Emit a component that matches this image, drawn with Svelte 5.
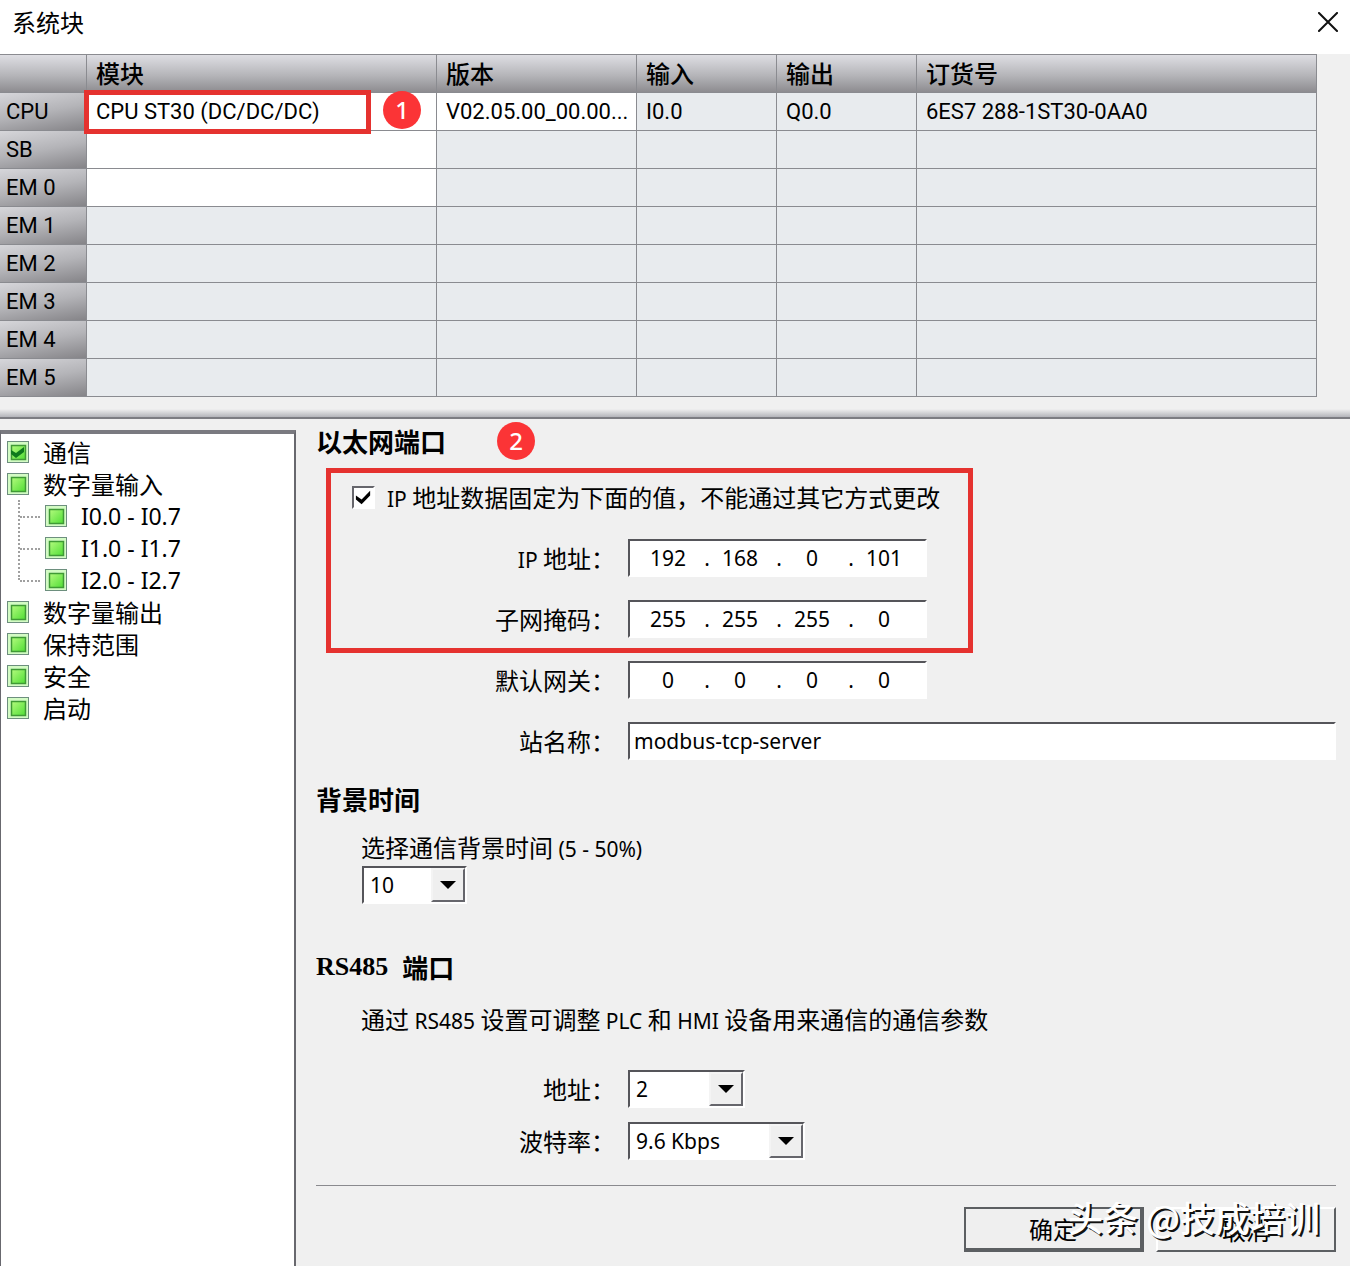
<script lang="ts">
  const modules = [
    {
      slot: "CPU",
      name: "CPU ST30 (DC/DC/DC)",
      version: "V02.05.00_00.00...",
      input: "I0.0",
      output: "Q0.0",
      order: "6ES7 288-1ST30-0AA0",
      editable: true,
    },
    { slot: "SB", editable: true },
    { slot: "EM 0", editable: true },
    { slot: "EM 1" },
    { slot: "EM 2" },
    { slot: "EM 3" },
    { slot: "EM 4" },
    { slot: "EM 5" },
  ];

  const tree = [
    { label: "通信", checked: true },
    { label: "数字量输入", children: ["I0.0 - I0.7", "I1.0 - I1.7", "I2.0 - I2.7"] },
    { label: "数字量输出" },
    { label: "保持范围" },
    { label: "安全" },
    { label: "启动" },
  ];

  let fixedIp = true;
  let ip = ["192", "168", "0", "101"];
  let mask = ["255", "255", "255", "0"];
  let gateway = ["0", "0", "0", "0"];
  let station = "modbus-tcp-server";
  let background = "10";
  let address = "2";
  let baud = "9.6 Kbps";
</script>

{#snippet node(checked)}
  <svg class="node" width="24" height="24" viewBox="0 0 24 24" aria-hidden="true">
    <rect x="1.5" y="1.5" width="21" height="21" fill="#d3fbc4" stroke="#6d8f7e" />
    <rect x="5.5" y="5.5" width="14" height="14" fill="url(#green)" stroke="#3f9a35" stroke-width="1.5" />
    {#if checked}
      <path d="M5 10l5 3 8-6v5l-8 6-5-4z" fill="#0d7a1c" />
    {/if}
  </svg>
{/snippet}

{#snippet arrow()}
  <span class="arrow" aria-hidden="true">
    <svg width="16" height="8" viewBox="0 0 16 8"><path d="M0 0h16L8 8z" fill="#000" /></svg>
  </span>
{/snippet}

{#snippet octets(id, parts)}
  <div class="ip" role="group" aria-labelledby="{id}-label">
    {#each parts as part, i}
      {#if i > 0}<span class="dot">.</span>{/if}
      <input id="{id}-{i}" value={part} maxlength="3" />
    {/each}
  </div>
{/snippet}

<svg class="defs" width="0" height="0" aria-hidden="true">
  <linearGradient id="green" x1="0" y1="0" x2="1" y2="1">
    <stop offset="0" stop-color="#b4fb7e" />
    <stop offset="1" stop-color="#4fdd35" />
  </linearGradient>
</svg>

<div class="dialog">
  <header>
    <h1>系统块</h1>
    <button class="close" aria-label="关闭">
      <svg width="20" height="20" viewBox="0 0 20 20">
        <path d="M1 1l18 18M19 1L1 19" stroke="#111" stroke-width="2" stroke-linecap="square" />
      </svg>
    </button>
  </header>

  <div class="modules">
    <table>
      <colgroup>
        <col class="slot" />
        <col class="name" />
        <col class="version" />
        <col class="io" />
        <col class="io" />
        <col />
      </colgroup>
      <thead>
        <tr>
          <td></td>
          <th>模块</th>
          <th>版本</th>
          <th>输入</th>
          <th>输出</th>
          <th>订货号</th>
        </tr>
      </thead>
      <tbody>
        {#each modules as row, i}
          <tr>
            <th scope="row">{row.slot}</th>
            <td class="module" class:editable={row.editable}>
              {row.name ?? ""}
              {#if i == 0}
                <span class="mark cell-mark"></span>
                <span class="badge one">1</span>
              {/if}
            </td>
            <td class:editable={row.version}>{row.version ?? ""}</td>
            <td>{row.input ?? ""}</td>
            <td>{row.output ?? ""}</td>
            <td>{row.order ?? ""}</td>
          </tr>
        {/each}
      </tbody>
    </table>
  </div>

  <div class="body">
    <nav>
      <ul>
        {#each tree as item}
          <li>
            <button>{@render node(item.checked)}{item.label}</button>
            {#if item.children}
              <ul class="children">
                {#each item.children as child}
                  <li><button class="latin">{@render node(false)}{child}</button></li>
                {/each}
              </ul>
            {/if}
          </li>
        {/each}
      </ul>
    </nav>

    <form on:submit|preventDefault>
      <section class="ethernet">
        <h2>以太网端口 <span class="badge two">2</span></h2>
        <div class="fields">
          <span class="mark group-mark"></span>
          <label class="check">
            <input type="checkbox" bind:checked={fixedIp} />
            <span><span class="latin">IP</span> 地址数据固定为下面的值，不能通过其它方式更改</span>
          </label>
          <div class="field">
            <label id="ip-label" for="ip-0"><span class="latin">IP</span> 地址：</label>
            {@render octets("ip", ip)}
          </div>
          <div class="field">
            <label id="mask-label" for="mask-0">子网掩码：</label>
            {@render octets("mask", mask)}
          </div>
          <div class="field">
            <label id="gateway-label" for="gateway-0">默认网关：</label>
            {@render octets("gateway", gateway)}
          </div>
          <div class="field">
            <label for="station">站名称：</label>
            <input id="station" class="text" bind:value={station} />
          </div>
        </div>
      </section>

      <section class="time">
        <h2>背景时间</h2>
        <label class="hint" for="background">选择通信背景时间 <span class="latin">(5 - 50%)</span></label>
        <div class="select small">
          <select id="background" bind:value={background}>
            <option>10</option>
            <option>20</option>
            <option>50</option>
          </select>
          {@render arrow()}
        </div>
      </section>

      <section class="serial">
        <h2><span class="serif">RS485</span> 端口</h2>
        <p class="hint">
          通过 <span class="latin">RS485</span> 设置可调整 <span class="latin">PLC</span> 和
          <span class="latin">HMI</span> 设备用来通信的通信参数
        </p>
        <div class="field">
          <label for="address">地址：</label>
          <div class="select medium">
            <select id="address" bind:value={address}>
              <option>1</option>
              <option>2</option>
              <option>3</option>
            </select>
            {@render arrow()}
          </div>
        </div>
        <div class="field">
          <label for="baud">波特率：</label>
          <div class="select large">
            <select id="baud" bind:value={baud}>
              <option>9.6 Kbps</option>
              <option>19.2 Kbps</option>
              <option>187.5 Kbps</option>
            </select>
            {@render arrow()}
          </div>
        </div>
      </section>

      <footer>
        <button class="default" type="submit">确定</button>
        <button type="button">取消</button>
        <span class="watermark">头条 @技成培训</span>
      </footer>
    </form>
  </div>
</div>

<style>
  :global(body) {
    margin: 0;
    background: #f0f0f0;
  }

  .dialog {
    display: flex;
    flex-direction: column;
    min-height: 100vh;
    color: #000;
    font-family: "Noto Sans CJK SC", sans-serif;
    font-size: 24px;
    line-height: 38px;
  }

  .dialog :global(*) {
    box-sizing: border-box;
  }

  .defs {
    position: absolute;
  }

  h1,
  h2,
  p,
  ul {
    margin: 0;
    padding: 0;
  }

  button,
  input,
  select {
    margin: 0;
    padding: 0;
    border: none;
    border-radius: 0;
    color: inherit;
    font: inherit;
    outline: none;
  }

  .latin,
  .ip,
  .text,
  .select {
    font-family: "Noto Sans", sans-serif;
    font-size: 21px;
  }

  .latin {
    line-height: 1;
  }

  header {
    display: flex;
    justify-content: space-between;
    align-items: center;
    height: 54px;
    padding: 0 12px 10px;
    background: #fff;
  }

  h1 {
    font-size: 24px;
    font-weight: 400;
  }

  .close {
    display: flex;
    background: none;
  }

  /* module table */

  .modules {
    padding: 0 33px 12px 0;
  }

  table {
    width: 100%;
    table-layout: fixed;
    border-spacing: 0;
    border-top: 1px solid #8a8b90;
    font-family: Roboto, "Noto Sans CJK SC", sans-serif;
    font-size: 22px;
    line-height: 36px;
  }

  .slot {
    width: 87px;
  }

  .name {
    width: 350px;
  }

  .version {
    width: 200px;
  }

  .io {
    width: 140px;
  }

  th,
  td {
    height: 38px;
    padding: 1px 0 0 9px;
    border-right: 1px solid #8a8b90;
    border-bottom: 1px solid #8a8b90;
    background: #e8ebee;
    font-weight: 400;
    text-align: left;
    white-space: nowrap;
  }

  thead th,
  thead td {
    padding-top: 3px;
    background: linear-gradient(#dedee3, #b5b5b9 55%, #8d8c90);
    font-size: 24px;
    line-height: 34px;
  }

  thead th {
    font-weight: 500;
  }

  tbody th {
    padding-left: 6px;
    background: linear-gradient(170deg, #d6d6da, #b4b4b8 50%, #858488);
  }

  .editable {
    background: #fff;
  }

  .module {
    position: relative;
  }

  .mark {
    position: absolute;
    z-index: 1;
    border: 5px solid #e5322f;
    pointer-events: none;
  }

  .cell-mark {
    top: -3px;
    left: -3px;
    width: 287px;
    height: 44px;
  }

  .badge {
    width: 38px;
    height: 38px;
    border-radius: 50%;
    background: #fb3436;
    color: #fff;
    font-family: "Noto Sans", sans-serif;
    font-size: 24px;
    font-weight: 500;
    line-height: 38px;
    text-align: center;
  }

  .one {
    position: absolute;
    top: -2px;
    left: 296px;
  }

  /* lower half */

  .body {
    position: relative;
    display: flex;
    flex: 1;
  }

  .body::before {
    content: "";
    position: absolute;
    width: 100%;
    height: 8px;
    border-bottom: 2px solid #7c7d82;
    background: linear-gradient(#f0f0f0, #b4b5ba);
  }

  nav {
    width: 296px;
    margin-top: 21px;
    padding: 2px 5px;
    border: solid #68686e;
    border-width: 4px 2px 0 1px;
    border-top-color: #7a7a80;
    background: #fff;
  }

  nav ul {
    list-style: none;
  }

  nav button {
    display: flex;
    align-items: center;
    gap: 13px;
    height: 32px;
    background: none;
    line-height: 32px;
  }

  nav .latin {
    font-family: "Noto Sans", sans-serif;
    font-size: 23px;
  }

  .children {
    position: relative;
    padding-left: 38px;
  }

  .children::before {
    content: "";
    position: absolute;
    top: 0;
    left: 12px;
    height: 80px;
    border-left: 2px dotted #a0a0a0;
  }

  .children li {
    position: relative;
  }

  .children li::before {
    content: "";
    position: absolute;
    top: 16px;
    left: -24px;
    width: 20px;
    border-top: 2px dotted #a0a0a0;
  }

  form {
    display: flex;
    flex: 1;
    flex-direction: column;
    padding: 13px 14px 13px 20px;
  }

  h2 {
    display: flex;
    gap: 14px;
    height: 38px;
    font-size: 26px;
    font-weight: 700;
  }

  .two {
    margin-left: 37px;
  }

  .serif {
    font-family: "Liberation Serif", serif;
    font-size: 26px;
  }

  .fields {
    position: relative;
    display: flex;
    flex-direction: column;
    gap: 23px;
    margin-top: 18px;
  }

  .group-mark {
    top: -10px;
    left: 10px;
    width: 647px;
    height: 185px;
  }

  .check {
    display: flex;
    align-items: center;
    gap: 12px;
    height: 38px;
    padding-left: 36px;
  }

  .check input {
    appearance: none;
    width: 23px;
    height: 23px;
    border: 2px solid #fff;
    border-top-color: #66666c;
    border-left-color: #66666c;
    background: #fff;
  }

  .check input:checked {
    background: #fff
      url("data:image/svg+xml,%3Csvg xmlns='http://www.w3.org/2000/svg' viewBox='0 0 20 20'%3E%3Cpath d='M2 8l6 4 9-9v5l-9 9-6-5z'/%3E%3C/svg%3E");
  }

  .field {
    display: flex;
    gap: 13px;
    height: 38px;
  }

  .field label {
    width: 299px;
    text-align: right;
  }

  .ip,
  .text,
  .select {
    height: 38px;
    border: 2px solid #fff;
    border-top-color: #55555a;
    border-left-color: #55555a;
    background: #fff;
    line-height: 34px;
  }

  .ip {
    display: flex;
    width: 299px;
    padding-left: 8px;
  }

  .ip input {
    width: 60px;
    background: none;
    text-align: center;
  }

  .dot {
    width: 12px;
    text-align: right;
  }

  .text {
    flex: 1;
    padding-left: 4px;
  }

  .time {
    margin-top: 20px;
  }

  .hint {
    display: block;
    height: 38px;
    padding-left: 45px;
  }

  .time .hint {
    margin-top: 10px;
  }

  .time .select {
    margin-left: 46px;
  }

  .select {
    display: grid;
  }

  .select select,
  .arrow {
    grid-area: 1 / 1;
  }

  .select select {
    appearance: none;
    padding-left: 6px;
    background: none;
  }

  .arrow {
    display: flex;
    justify-content: center;
    align-items: center;
    justify-self: end;
    width: 34px;
    border: 2px solid #f4f4f4;
    border-right-color: #66666c;
    border-bottom-color: #66666c;
    background: #efefef;
    pointer-events: none;
  }

  .small {
    width: 105px;
  }

  .medium {
    width: 117px;
  }

  .large {
    width: 177px;
  }

  .serial {
    margin-top: 44px;
  }

  .serial .hint {
    margin: 14px 0 32px;
  }

  .serial .field {
    margin-bottom: 14px;
  }

  footer {
    position: relative;
    display: flex;
    justify-content: flex-end;
    gap: 12px;
    margin-top: 11px;
    padding-top: 21px;
    border-top: 1px solid #8a8a8e;
  }

  footer button {
    width: 180px;
    height: 45px;
    border: 2px solid #fff;
    border-right-color: #5c5f62;
    border-bottom-color: #5c5f62;
    background: #efefef;
  }

  footer .default {
    border: 2px solid #5c5f62;
    border-right-width: 4px;
    border-bottom-width: 4px;
  }

  .watermark {
    position: absolute;
    top: 11px;
    right: 16px;
    color: #fff;
    font-size: 35px;
    font-weight: 500;
    line-height: 40px;
    text-shadow: 2px 2px 0 #111;
    white-space: nowrap;
  }
</style>
